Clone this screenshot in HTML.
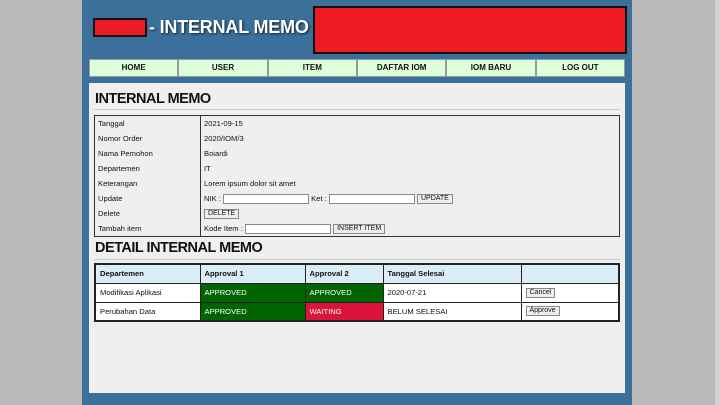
<!DOCTYPE html>
<html><head><meta charset="utf-8"><style>
*{margin:0;padding:0;box-sizing:border-box}
body{width:720px;height:405px;overflow:hidden;background:#b9b9b9;font-family:"Liberation Sans",sans-serif;position:relative}
.wrap{position:absolute;left:82px;top:0;width:550px;height:405px;background:#3a7099}
.abs{position:absolute}
.r1{left:11px;top:18px;width:54px;height:19px;background:#ed1c24;border:2px solid #111}
.title{left:67px;top:17px;color:#fff;font-weight:bold;font-size:18px;text-shadow:1px 1px 2px #123;letter-spacing:-0.2px}
.r2{left:231px;top:6px;width:314px;height:48px;background:#ed1c24;border:2px solid #111}
.nav{left:7px;top:59px;width:536px;height:18px;display:flex}
.nav div{flex:1;background:#ddffd9;border:1px solid #999;font-size:8px;font-weight:bold;text-align:center;line-height:16px;color:#111}
.panel{left:7px;top:83px;width:536px;height:310px;background:#efefef}
h1{position:absolute;left:6px;font-size:14.5px;font-weight:bold;color:#111;letter-spacing:-0.5px}
.hr{position:absolute;left:5px;width:526px;height:1px;background:#ccc}
table{position:absolute;border-collapse:collapse;font-size:7.6px;color:#111}
.t1{left:5px;top:32px;width:526px;height:122px;border:1px solid #333}
.t1 td{height:15px;padding-left:3px}
.t1 td:first-child{width:106px;border-right:1px solid #333}
input.tx{height:10px;border:1px solid #888;background:#fff;vertical-align:middle}
.btn{display:inline-block;height:10px;line-height:8px;border:1px solid #888;background:#eee;font-size:7px;padding:0 3px;vertical-align:middle}
.t2{left:5px;top:180px;width:526px;border:2px solid #222}
.t2 td{border:1px solid #222;height:19px;padding-left:4px}
.t2 tr:first-child td{background:#daecf6;font-weight:bold}
.g{background:#006400;color:#fff}
.rd{background:#dc143c;color:#fff}
.w{background:#fff}
.sb{position:absolute;right:0;top:0;width:5px;height:405px;background:#d0d0d0}
</style></head><body>
<div class="wrap">
<div class="abs r1"></div>
<div class="abs title">- INTERNAL MEMO</div>
<div class="abs r2"></div>
<div class="abs nav"><div>HOME</div><div>USER</div><div>ITEM</div><div>DAFTAR IOM</div><div>IOM BARU</div><div>LOG OUT</div></div>
<div class="abs panel">
<h1 style="top:8px">INTERNAL MEMO</h1>
<div class="hr" style="top:26px"></div>
<table class="t1">
<tr><td>Tanggal</td><td>2021-09-15</td></tr>
<tr><td>Nomor Order</td><td>2020/IOM/3</td></tr>
<tr><td>Nama Pemohon</td><td>Boiardi</td></tr>
<tr><td>Departemen</td><td>IT</td></tr>
<tr><td>Keterangan</td><td>Lorem ipsum dolor sit amet</td></tr>
<tr><td>Update</td><td>NIK : <input class="tx" style="width:86px"> Ket : <input class="tx" style="width:86px"> <span class="btn">UPDATE</span></td></tr>
<tr><td>Delete</td><td><span class="btn">DELETE</span></td></tr>
<tr><td>Tambah item</td><td>Kode Item : <input class="tx" style="width:86px"> <span class="btn">INSERT ITEM</span></td></tr>
</table>
<h1 style="top:157px">DETAIL INTERNAL MEMO</h1>
<div class="hr" style="top:176px"></div>
<table class="t2">
<tr><td style="width:105px">Departemen</td><td style="width:105px">Approval 1</td><td style="width:78px">Approval 2</td><td style="width:138px">Tanggal Selesai</td><td></td></tr>
<tr class="w"><td>Modifikasi Aplikasi</td><td class="g">APPROVED</td><td class="g">APPROVED</td><td>2020-07-21</td><td><span class="btn">Cancel</span></td></tr>
<tr class="w"><td>Perubahan Data</td><td class="g">APPROVED</td><td class="rd">WAITING</td><td>BELUM SELESAI</td><td><span class="btn">Approve</span></td></tr>
</table>
</div>
</div>
<div class="sb"></div>
</body></html>
